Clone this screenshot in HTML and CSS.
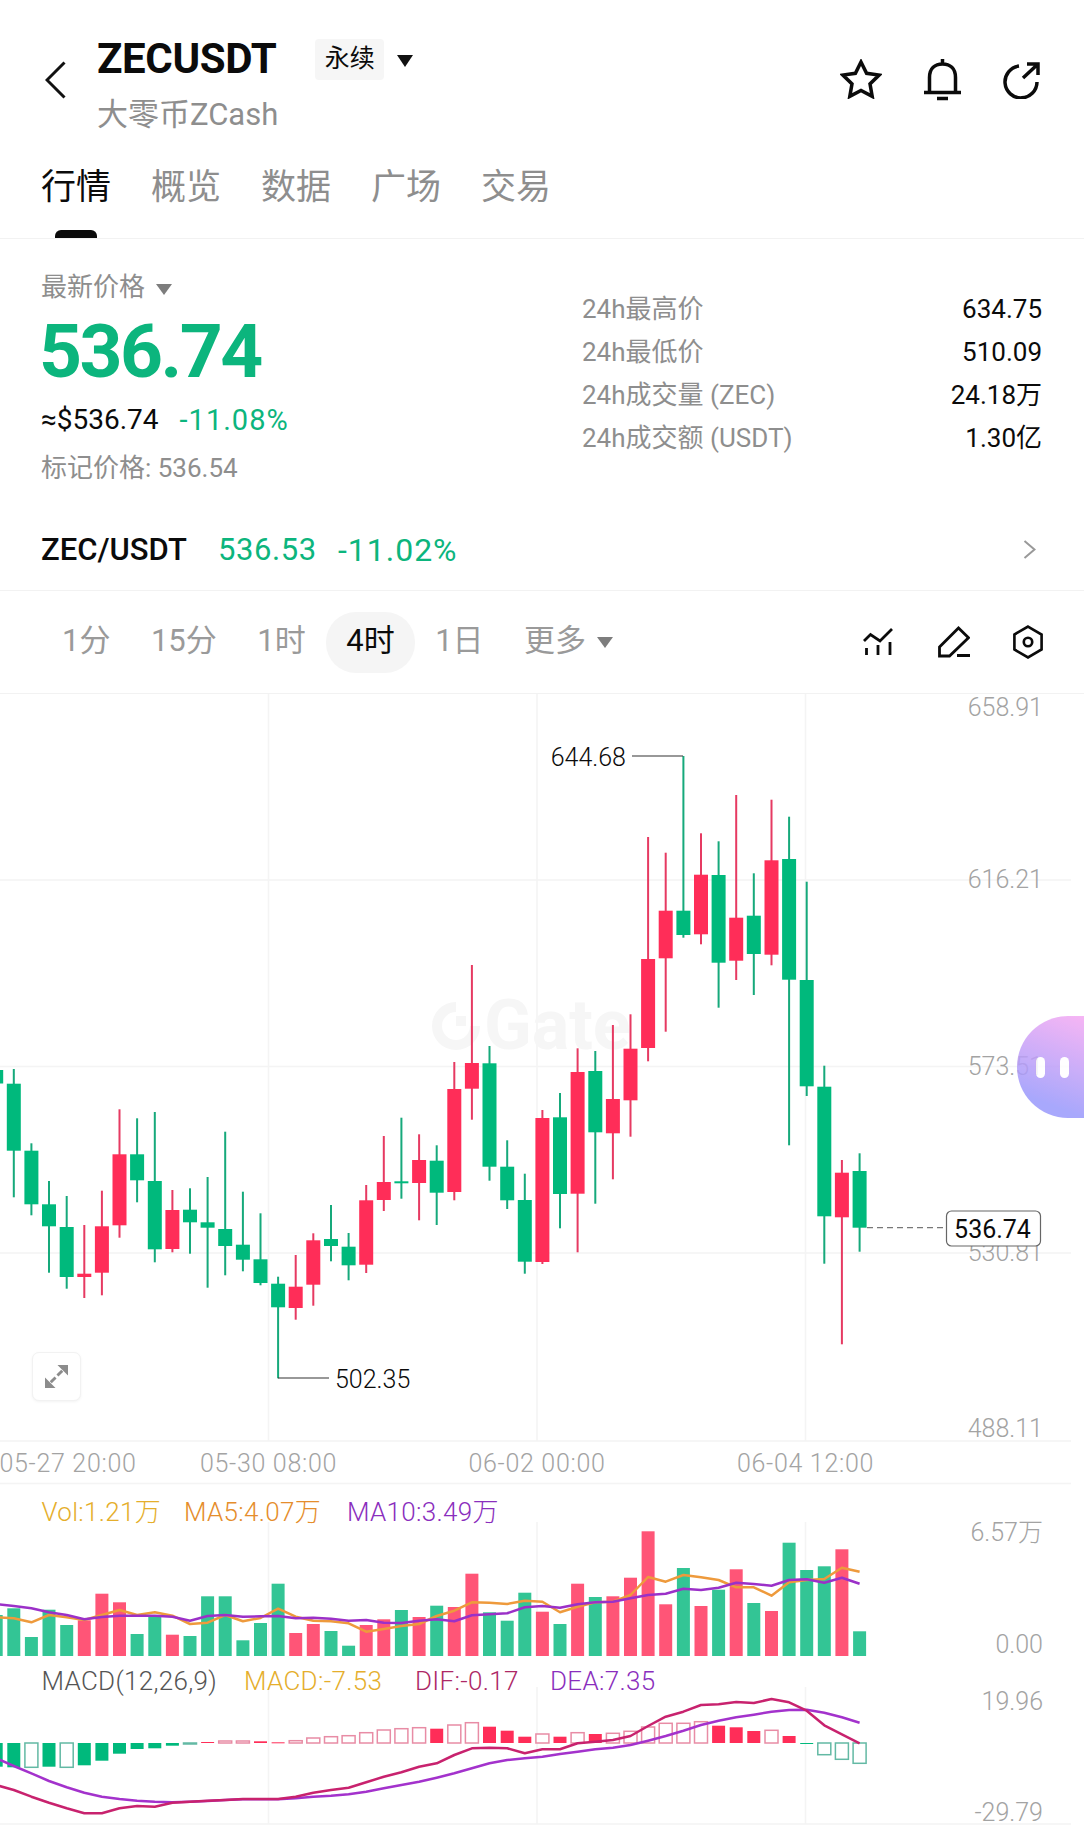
FILE: index.html
```html
<!DOCTYPE html>
<html lang="zh-CN">
<head>
    <meta charset="UTF-8">
    <meta name="viewport" content="width=device-width, initial-scale=1.0">
    <title>ZECUSDT 永续</title>
    <link rel="stylesheet" href="styles.css">
</head>
<body>
    <div class="page">
        <div class="topbar">
            <svg class="back-icon" viewBox="0 0 21 38"><path d="M19.5 1.5 2 19l17.5 17.5"/></svg>
            <div class="title-block">
                <div class="title-row">
                    <span class="symbol">ZECUSDT</span>
                    <span class="badge">永续</span>
                    <span class="caret caret-black"></span>
                </div>
                <div class="subtitle">大零币ZCash</div>
            </div>
            <div class="actions">
                <svg class="icon icon-star" viewBox="0 0 42 40"><path d="M21 3l5.6 11.3L39.1 16.1 30 24.9l2.2 12.5L21 31.5 9.8 37.4 12 24.9 2.9 16.1l12.5-1.8z"/></svg>
                <svg class="icon icon-bell" viewBox="0 0 37 42"><path d="M5.5 33.5V18.500C5.500 9.500 11 5 18.500 5S31.500 9.500 31.500 18.500V33.500M0 33.500H37M18.500 0V5M13 39.500H24"/></svg>
                <svg class="icon icon-share" viewBox="0 0 38 38"><path d="M16 5A16 16 0 1 0 34 21M20 17 35 3M24 3H35V14"/></svg>
            </div>
        </div>

        <div class="tabs">
            <span class="tab active">行情</span>
            <span class="tab">概览</span>
            <span class="tab">数据</span>
            <span class="tab">广场</span>
            <span class="tab">交易</span>
        </div>

        <div class="stats">
            <div class="price-col">
                <div class="latest-label">最新价格<span class="caret caret-gray"></span></div>
                <div class="price">536.74</div>
                <div class="price-sub"><span class="usd">≈$536.74</span><span class="change">-11.08%</span></div>
                <div class="mark-price">标记价格: 536.54</div>
            </div>
            <div class="day-col">
                <div class="day-row"><span>24h最高价</span><b>634.75</b></div>
                <div class="day-row"><span>24h最低价</span><b>510.09</b></div>
                <div class="day-row"><span>24h成交量 (ZEC)</span><b>24.18万</b></div>
                <div class="day-row"><span>24h成交额 (USDT)</span><b>1.30亿</b></div>
            </div>
        </div>

        <div class="spot">
            <span class="spot-pair">ZEC/USDT</span>
            <span class="spot-price">536.53</span>
            <span class="spot-change">-11.02%</span>
            <svg class="spot-arrow" viewBox="0 0 13 19"><path d="M1.500 1 11.500 9.500 1.500 18"/></svg>
        </div>

        <div class="toolbar">
            <span class="period">1分</span>
            <span class="period">15分</span>
            <span class="period">1时</span>
            <span class="period active">4时</span>
            <span class="period">1日</span>
            <span class="period">更多<span class="caret caret-gray"></span></span>
            <div class="tools">
                <svg class="tool tool-lines" viewBox="0 0 30 30"><path d="M1 14 7.500 7.500 17 14 29 2M3.500 21V28M15 18V28M27 15V28"/></svg>
                <svg class="tool tool-pen" viewBox="0 0 32 32"><path d="M1.500 21 20.500 2l10 9.700L11.500 30H1.500zM19 29.500H32"/></svg>
                <svg class="tool tool-hex" viewBox="0 0 32 36"><path d="M16 1.500 30.500 10V26L16 34.500 1.500 26V10z"/><circle cx="16" cy="18" r="4.500"/></svg>
            </div>
        </div>

        <div class="chart">
            <svg id="chart-svg" viewBox="0 694 1084 1143">
                <g class="grid">
                    <path d="M0 880H1071M0 1066.500H1071M0 1253H1071M0 1441H1071M0 1483.500H1071M0 1824H1071"/>
                    <path d="M268.500 694V1441M537 694V1441M805.500 694V1441"/>
                    <path d="M268.500 1522V1656M537 1522V1656M805.500 1522V1656"/>
                    <path d="M268.500 1687V1824M537 1687V1824M805.500 1687V1824"/>
                </g>

                <g class="watermark">
                    <path class="watermark-ring" d="M456 1007A19 19 0 1 0 475 1026"/>
                    <rect x="456" y="1016" width="10" height="10"/>
                    <text x="484" y="1049">Gate</text>
                </g>

                <g id="candles"></g>

                <path class="leader" d="M632 756H683"/>
                <path class="leader" d="M278 1378H329"/>
                <path class="last-line" d="M867 1227.700H946"/>
                <text class="peak" x="626" y="766">644.68</text>
                <text class="peak" x="335" y="1388">502.35</text>

                <g class="axis">
                    <text x="1043" y="716">658.91</text>
                    <text x="1043" y="888">616.21</text>
                    <text x="1043" y="1075">573.51</text>
                    <text x="1043" y="1261">530.81</text>
                    <text x="1043" y="1437">488.11</text>
                    <text x="1043" y="1541">6.57万</text>
                    <text x="1043" y="1653">0.00</text>
                    <text x="1043" y="1710">19.96</text>
                    <text x="1043" y="1821">-29.79</text>
                </g>

                <rect class="last-box" x="946.500" y="1211" width="94" height="35" rx="5"/>
                <text class="last-text" x="992.500" y="1238">536.74</text>

                <g class="times">
                    <text x="68" y="1472">05-27 20:00</text>
                    <text x="268.500" y="1472">05-30 08:00</text>
                    <text x="537" y="1472">06-02 00:00</text>
                    <text x="805.500" y="1472">06-04 12:00</text>
                </g>

                <g id="volume"></g>
                <g id="macd"></g>

                <text class="legend" y="1521">
                    <tspan class="c-yellow" x="41.500">Vol:1.21万</tspan>
                    <tspan class="c-orange" x="184">MA5:4.07万</tspan>
                    <tspan class="c-purple" x="347">MA10:3.49万</tspan>
                </text>
                <text class="legend" y="1690">
                    <tspan class="c-gray" x="41.500">MACD(12,26,9)</tspan>
                    <tspan class="c-yellow" x="244">MACD:-7.53</tspan>
                    <tspan class="c-rose" x="415">DIF:-0.17</tspan>
                    <tspan class="c-purple" x="550">DEA:7.35</tspan>
                </text>
            </svg>

            <div class="expand-btn">
                <svg viewBox="0 0 24 24"><path class="arrow-fill" d="M13 0H24V11zM0 13V24H11z"/><path class="arrow-stem" d="M18 6 13 11M6 18l5-5"/></svg>
            </div>
            <div class="float-widget"><span></span><span></span></div>
        </div>
    </div>
    <script src="chart.js"></script>
</body>
</html>
```

FILE: styles.css
```css
* {
    box-sizing: border-box;
}
body {
    margin: 0;
    background: #fff;
    font-family: Roboto, "Noto Sans CJK SC", sans-serif;
    color: #0b0b0b;
}
.page {
    width: 1084px;
    height: 1837px;
    overflow: hidden;
}
.topbar {
    display: flex;
    align-items: flex-start;
    height: 166px;
    padding: 38px 43px 0 45px;
}
.back-icon {
    width: 21px;
    height: 38px;
    margin-top: 23px;
    fill: none;
    stroke: #111;
    stroke-width: 3;
}
.title-block {
    margin-left: 31px;
}
.title-row {
    display: flex;
    align-items: center;
    height: 41px;
}
.symbol {
    font-size: 42px;
    line-height: 41px;
    font-weight: 700;
    letter-spacing: -.4px;
}
.badge {
    margin-left: 39px;
    margin-top: 1px;
    width: 69px;
    height: 41px;
    line-height: 39px;
    text-align: center;
    font-size: 25px;
    background: #f6f6f6;
    border-radius: 4px;
}
.caret {
    display: inline-block;
    width: 0;
    height: 0;
    border-style: solid;
    border-color: transparent;
    border-width: 12px 8.500px 0;
}
.caret-black {
    margin-left: 13px;
    margin-top: 4px;
    border-top-color: #111;
}
.caret-gray {
    margin-left: 11px;
    border-width: 11px 8px 0;
    border-top-color: #7d7d7d;
    vertical-align: middle;
}
.subtitle {
    margin-top: 21px;
    font-size: 31px;
    line-height: 30px;
    color: #8e8e8e;
}
.actions {
    display: flex;
    gap: 42px;
    margin-left: auto;
    margin-top: 21px;
}
.icon {
    fill: none;
    stroke: #0b0b0b;
    stroke-width: 3.500;
}
.icon-star {
    width: 42px;
    height: 40px;
}
.icon-bell {
    width: 37px;
    height: 42px;
}
.icon-share {
    width: 38px;
    height: 38px;
    margin-top: 2px;
}

.tabs {
    display: flex;
    gap: 40px;
    height: 73px;
    padding-left: 41px;
    border-bottom: 1px solid #f2f2f2;
}
.tab {
    position: relative;
    height: 72px;
    font-size: 35px;
    line-height: 44px;
    color: #8e8e8e;
}
.tab.active {
    color: #0b0b0b;
}
.tab.active::after {
    content: "";
    position: absolute;
    left: 14px;
    right: 14px;
    bottom: 0;
    height: 8px;
    background: #0b0b0b;
    border-radius: 6px 6px 0 0;
}

.stats {
    display: flex;
    padding-left: 41px;
    height: 246px;
}
.price-col {
    width: 541px;
    padding-top: 33px;
}
.latest-label {
    font-size: 26px;
    line-height: 30px;
    color: #8e8e8e;
}
.price {
    margin-top: 9px;
    margin-left: -2px;
    font-size: 75px;
    line-height: 80px;
    font-weight: 700;
    letter-spacing: -2.500px;
    color: #0cb57d;
}
.price-sub {
    display: flex;
    align-items: center;
    margin-top: 13px;
    font-size: 28px;
    line-height: 32px;
}
.change {
    margin-left: 21px;
    font-size: 29px;
    letter-spacing: 1px;
    color: #0cb57d;
}
.mark-price {
    margin-top: 17px;
    font-size: 26px;
    line-height: 30px;
    color: #8e8e8e;
}
.day-col {
    width: 460px;
    padding-top: 49px;
}
.day-row {
    display: flex;
    justify-content: space-between;
    height: 43px;
    line-height: 43px;
    font-size: 26px;
    color: #8e8e8e;
}
.day-row b {
    font-weight: 400;
    color: #0b0b0b;
}

.spot {
    display: flex;
    align-items: center;
    height: 106px;
    padding: 24px 48px 0 41px;
    border-bottom: 1px solid #f2f2f2;
    font-size: 31px;
}
.spot-pair {
    font-weight: 500;
}
.spot-price {
    margin-left: 31px;
    font-size: 31px;
    letter-spacing: .6px;
    color: #0cb57d;
}
.spot-change {
    margin-left: 21px;
    font-size: 32px;
    letter-spacing: 1px;
    color: #0cb57d;
}
.spot-arrow {
    width: 13px;
    height: 19px;
    margin-left: auto;
    fill: none;
    stroke: #999;
    stroke-width: 2;
}

.toolbar {
    display: flex;
    align-items: center;
    gap: .500px;
    height: 103px;
    padding: 0 41px 0 42px;
    border-bottom: 1px solid #f2f2f2;
}
.period {
    height: 61px;
    padding: 0 20px;
    font-size: 31px;
    line-height: 58px;
    color: #9a9a9a;
    border-radius: 30px;
}
.period.active {
    color: #0b0b0b;
    background: #f5f5f5;
}
.tools {
    display: flex;
    align-items: center;
    margin-left: auto;
}
.tool {
    fill: none;
    stroke: #0b0b0b;
    stroke-width: 2.800;
}
.tool-lines {
    width: 30px;
    height: 30px;
}
.tool-pen {
    width: 32px;
    height: 32px;
    margin-left: 45px;
}
.tool-hex {
    width: 30px;
    height: 34px;
    margin-left: 43px;
}

.chart {
    position: relative;
}
#chart-svg {
    display: block;
    width: 1084px;
    height: 1143px;
}
.grid path {
    fill: none;
    stroke: #f4f4f4;
    stroke-width: 1.500;
}
.watermark {
    fill: #f6f6f6;
}
.watermark-ring {
    fill: none;
    stroke: #f6f6f6;
    stroke-width: 10;
}
.watermark text {
    font-size: 70px;
    font-weight: 700;
}
.bull {
    fill: #00b97c;
}
.bear {
    fill: #ff2d58;
}
.wick-bull {
    fill: #16a97b;
}
.wick-bear {
    fill: #e63a62;
}
.vol-bull {
    fill: #33c595;
}
.vol-bear {
    fill: #ff5577;
}
.macd-hollow-bull {
    fill: #fff;
    stroke: #63b9a4;
    stroke-width: 1.500;
}
.macd-hollow-bear {
    fill: #fff;
    stroke: #e88ca5;
    stroke-width: 1.500;
}
.line {
    fill: none;
    stroke-width: 2.500;
    stroke-linejoin: round;
}
.line-ma5 {
    stroke: #ee9a3c;
}
.line-ma10 {
    stroke: #9b30c8;
}
.line-dif {
    stroke: #c8226e;
}
.line-dea {
    stroke: #a332cc;
}
.leader {
    fill: none;
    stroke: #333;
    stroke-width: 1.200;
}
.last-line {
    fill: none;
    stroke: #777;
    stroke-width: 1.300;
    stroke-dasharray: 6 4;
}
.peak {
    font-size: 25px;
    font-weight: 300;
    fill: #0b0b0b;
}
.peak:first-of-type {
    text-anchor: end;
}
.axis text {
    font-size: 25px;
    font-weight: 300;
    fill: #a3a3a3;
    text-anchor: end;
}
.times text {
    font-size: 25px;
    font-weight: 300;
    fill: #a3a3a3;
    letter-spacing: .7px;
    text-anchor: middle;
}
.last-box {
    fill: #fff;
    stroke: #666;
    stroke-width: 1.200;
}
.last-text {
    font-size: 25px;
    fill: #0b0b0b;
    text-anchor: middle;
}
.legend {
    font-size: 26px;
    font-weight: 300;
    letter-spacing: .3px;
}
.c-yellow {
    fill: #e5ae2c;
}
.c-orange {
    fill: #e58d2c;
}
.c-purple {
    fill: #8a2ebd;
}
.c-gray {
    fill: #555;
}
.c-rose {
    fill: #ad2866;
}
.expand-btn {
    position: absolute;
    left: 32px;
    top: 658px;
    display: flex;
    align-items: center;
    justify-content: center;
    width: 49px;
    height: 49px;
    background: #fff;
    border: 1.500px solid #f2f2f2;
    border-radius: 7px;
    box-shadow: 0 1px 3px rgba(0,0,0,0.05);
}
.expand-btn svg {
    width: 23px;
    height: 23px;
}
.arrow-fill {
    fill: #8c8c8c;
}
.arrow-stem {
    fill: none;
    stroke: #8c8c8c;
    stroke-width: 3;
}
.float-widget {
    position: absolute;
    top: 322px;
    right: 0;
    display: flex;
    justify-content: flex-end;
    align-items: center;
    gap: 15px;
    width: 67px;
    height: 102px;
    padding-right: 15px;
    background: linear-gradient(200deg, #f5a9f3, #9a99fc 80%);
    border-radius: 51px 0 0 51px;
    opacity: .85;
}
.float-widget span {
    width: 9px;
    height: 21px;
    background: #fff;
    border-radius: 5px;
}
```

FILE: chart.js
```js
// candle x positions, the chart scrolls so the first one sits off the left edge
function candleX(i) {
    return 13.8 + 17.62 * i;
}

// [up, wick top, body top, body bottom, wick bottom] in page pixels
var candles = [
    [0, 1066, 1070, 1083.5, 1084],
    [0, 1069, 1083.7, 1150.7, 1197.3],
    [0, 1143.3, 1150.7, 1204.3, 1215.3],
    [0, 1181, 1204.3, 1226.3, 1272.7],
    [0, 1196, 1227, 1277, 1288.7],
    [1, 1225, 1273.7, 1277, 1298],
    [1, 1190.7, 1226.3, 1272.7, 1295.3],
    [1, 1109.3, 1154.3, 1225.3, 1237.7],
    [0, 1118.3, 1154.3, 1180.3, 1202.3],
    [0, 1112, 1181, 1249.3, 1262.3],
    [1, 1190, 1210, 1249, 1252.3],
    [0, 1188.3, 1209.7, 1222.3, 1253.7],
    [0, 1177, 1222.3, 1227.7, 1287.7],
    [0, 1131.7, 1229, 1246, 1275.3],
    [0, 1191.7, 1244.7, 1259.7, 1271.3],
    [0, 1213.3, 1259.3, 1283, 1285.3],
    [0, 1276.7, 1283.7, 1307.3, 1378.3],
    [1, 1255, 1286.7, 1308, 1319.7],
    [1, 1233.3, 1240.3, 1284.7, 1305.7],
    [0, 1205, 1239, 1246, 1261.3],
    [0, 1233, 1246.7, 1265.3, 1280.3],
    [1, 1185, 1200.3, 1264.7, 1273],
    [1, 1136, 1182, 1200, 1211],
    [0, 1117.7, 1181.3, 1183.3, 1198.7],
    [1, 1134.3, 1160, 1183, 1220.3],
    [0, 1145.3, 1160.7, 1192.7, 1225],
    [1, 1062, 1089, 1192, 1200.3],
    [1, 965, 1063, 1088.7, 1119.7],
    [0, 1046, 1063.3, 1166.7, 1180.7],
    [0, 1140.3, 1166.7, 1200.3, 1209],
    [0, 1173.7, 1200, 1261.7, 1273.7],
    [1, 1110, 1118, 1262, 1264],
    [0, 1093, 1117.3, 1194, 1228.3],
    [1, 1048.3, 1072, 1193.7, 1252.3],
    [0, 1051, 1071, 1132.3, 1203.7],
    [1, 1025, 1099, 1133.3, 1179.3],
    [1, 1014.3, 1048.7, 1100.3, 1136.7],
    [1, 837, 959, 1048, 1061.3],
    [1, 852.7, 910.7, 958.3, 1031.7],
    [0, 756, 910.7, 935, 937.7],
    [1, 833.3, 874.7, 934.3, 944.3],
    [0, 841.3, 875, 962.7, 1007.7],
    [1, 795, 917.7, 960.7, 980],
    [0, 873.3, 915.7, 954, 995],
    [1, 799.7, 860.3, 954.7, 965.3],
    [0, 816.7, 859, 979.7, 1145.3],
    [0, 881.7, 980, 1086.3, 1096],
    [0, 1065.7, 1086.7, 1216.3, 1263.7],
    [1, 1160, 1172.7, 1217.3, 1344.3],
    [0, 1153.3, 1171, 1227.7, 1251.7]
];

// lower panes are measured in thirds of a pixel below y=1480
function paneY(v) {
    return 1480 + v / 3;
}

var volumes = [405, 385, 471, 389, 435, 421, 341, 367, 462, 405, 464, 468, 349, 349, 481, 429, 311, 459, 432, 453, 497, 435, 418, 390, 411, 377, 381, 281, 397, 422, 338, 395, 432, 311, 351, 349, 293, 154, 373, 264, 378, 329, 268, 369, 393, 188, 270, 259, 208, 454];
var ma5 = [412, 415, 427, 405, 412, 420, 405, 390, 405, 397, 407, 432, 428, 405, 424, 414, 386, 410, 422, 424, 430, 455, 447, 438, 432, 408, 392, 367, 368, 372, 362, 365, 397, 380, 367, 365, 345, 291, 305, 285, 292, 300, 322, 322, 347, 307, 300, 297, 263, 275];
var ma10 = [372, 378, 385, 397, 405, 418, 411, 407, 407, 407, 410, 422, 408, 405, 410, 409, 408, 415, 413, 416, 422, 420, 428, 429, 422, 418, 424, 406, 403, 400, 382, 378, 383, 373, 367, 365, 355, 345, 341, 326, 330, 323, 308, 312, 317, 300, 298, 308, 293, 311];
var dif = [915, 930, 950, 968, 985, 1000, 1000, 985, 978, 980, 968, 965, 962, 960, 957, 957, 957, 950, 938, 930, 923, 907, 890, 877, 860, 850, 825, 805, 803, 805, 820, 808, 808, 790, 785, 780, 768, 738, 710, 695, 675, 673, 666, 669, 657, 667, 692, 736, 763, 790];
var dea = [835, 858, 880, 903, 922, 938, 950, 957, 962, 965, 967, 965, 963, 960, 958, 958, 958, 955, 950, 947, 943, 935, 925, 915, 905, 893, 880, 865, 850, 840, 835, 830, 822, 815, 808, 803, 795, 782, 768, 752, 735, 722, 712, 704, 695, 690, 689, 698, 712, 728];

// [far end of the bar, hollow], the bar always starts from the zero line
var macdZero = 789;
var macdBars = [[860, 0], [862, 0], [862, 1], [860, 0], [862, 1], [856, 0], [842, 0], [821, 0], [807, 0], [805, 0], [797, 0], [791, 1], [786, 0], [783, 1], [783, 1], [784, 0], [787, 0], [782, 1], [774, 1], [770, 1], [767, 1], [758, 1], [750, 1], [746, 1], [743, 1], [746, 0], [735, 1], [728, 1], [740, 0], [752, 0], [770, 0], [762, 1], [770, 0], [758, 1], [762, 0], [760, 1], [754, 1], [741, 1], [730, 1], [730, 1], [725, 1], [737, 0], [742, 0], [753, 0], [751, 1], [768, 0], [791, 0], [824, 1], [838, 1], [850, 1]];

function rect(cls, x, y, w, h) {
    return '<rect class="' + cls + '" x="' + x.toFixed(1) + '" y="' + y.toFixed(1) + '" width="' + w + '" height="' + Math.max(h, 1).toFixed(1) + '"/>';
}

function polyline(cls, values) {
    var points = values.map(function (v, i) {
        return candleX(i - 1).toFixed(1) + ',' + paneY(v).toFixed(1);
    });
    return '<polyline class="line ' + cls + '" points="' + points.join(' ') + '"/>';
}

var candleHtml = '';
candles.forEach(function (c, i) {
    var x = candleX(i - 1);
    var side = c[0] ? 'bear' : 'bull';
    candleHtml += rect('wick-' + side, x - 1, c[1], 2, c[4] - c[1]);
    candleHtml += rect(side, x - 7, c[2], 14, c[3] - c[2]);
});
document.getElementById('candles').innerHTML = candleHtml;

var volumeHtml = '';
volumes.forEach(function (v, i) {
    var side = candles[i][0] ? 'bear' : 'bull';
    volumeHtml += rect('vol-' + side, candleX(i - 1) - 6.5, paneY(v), 13, paneY(528) - paneY(v));
});
volumeHtml += polyline('line-ma5', ma5) + polyline('line-ma10', ma10);
document.getElementById('volume').innerHTML = volumeHtml;

var macdHtml = '';
macdBars.forEach(function (b, i) {
    var side = b[0] < macdZero ? 'bear' : 'bull';
    var top = paneY(Math.min(b[0], macdZero));
    var height = Math.abs(b[0] - macdZero) / 3;
    var cls = b[1] ? 'macd-hollow-' + side : side;
    macdHtml += rect(cls, candleX(i - 1) - 6.5, top, 13, height);
});
macdHtml += polyline('line-dea', dea) + polyline('line-dif', dif);
document.getElementById('macd').innerHTML = macdHtml;
```
